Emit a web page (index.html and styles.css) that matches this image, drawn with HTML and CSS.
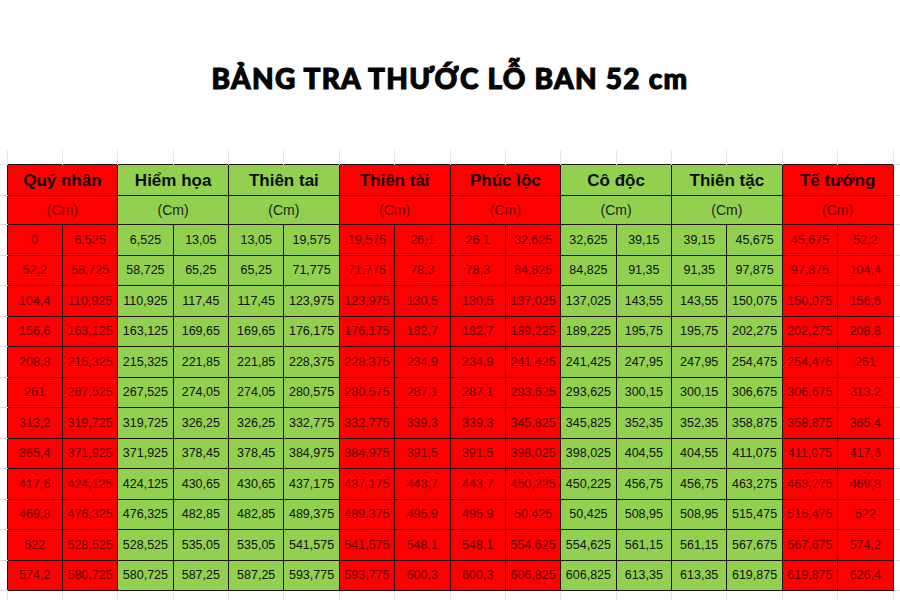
FILE: index.html
```html
<!DOCTYPE html>
<html lang="vi">
<head>
<meta charset="utf-8">
<title>Bảng tra thước Lỗ Ban 52 cm</title>
<link rel="stylesheet" href="styles.css">
</head>
<body>
<div class="page">
  <header class="title-wrap"><h1 class="title">BẢNG TRA THƯỚC LỖ BAN 52 cm</h1></header>
  <table class="sheet">
    <colgroup>
      <col class="c-edge">
      <col class="c"><col class="c"><col class="c"><col class="c"><col class="c"><col class="c"><col class="c"><col class="c">
      <col class="c"><col class="c"><col class="c"><col class="c"><col class="c"><col class="c"><col class="c"><col class="c">
      <col class="c-edge">
    </colgroup>
    <tr class="ghost">
      <td class="ge"></td>
      <td></td><td></td><td></td><td></td><td></td><td></td><td></td><td></td>
      <td></td><td></td><td></td><td></td><td></td><td></td><td></td><td></td>
      <td class="ge"></td>
    </tr>
    <tr class="head">
      <td class="edge"></td>
      <td class="r" colspan="2">Quý nhân</td>
      <td class="g" colspan="2">Hiểm họa</td>
      <td class="g" colspan="2">Thiên tai</td>
      <td class="r" colspan="2">Thiên tài</td>
      <td class="r" colspan="2">Phúc lộc</td>
      <td class="g" colspan="2">Cô độc</td>
      <td class="g" colspan="2">Thiên tặc</td>
      <td class="r" colspan="2">Tế tướng</td>
      <td class="edge"></td>
    </tr>
    <tr class="unit">
      <td class="edge"></td>
      <td class="r" colspan="2">(Cm)</td>
      <td class="g" colspan="2">(Cm)</td>
      <td class="g" colspan="2">(Cm)</td>
      <td class="r" colspan="2">(Cm)</td>
      <td class="r" colspan="2">(Cm)</td>
      <td class="g" colspan="2">(Cm)</td>
      <td class="g" colspan="2">(Cm)</td>
      <td class="r" colspan="2">(Cm)</td>
      <td class="edge"></td>
    </tr>
    <tr class="data"><td class="edge"></td><td class="r">0</td><td class="r">6,525</td><td class="g">6,525</td><td class="g">13,05</td><td class="g">13,05</td><td class="g">19,575</td><td class="r">19,575</td><td class="r">26,1</td><td class="r">26,1</td><td class="r">32,625</td><td class="g">32,625</td><td class="g">39,15</td><td class="g">39,15</td><td class="g">45,675</td><td class="r">45,675</td><td class="r">52,2</td><td class="edge"></td></tr>
    <tr class="data"><td class="edge"></td><td class="r">52,2</td><td class="r">58,725</td><td class="g">58,725</td><td class="g">65,25</td><td class="g">65,25</td><td class="g">71,775</td><td class="r">71,775</td><td class="r">78,3</td><td class="r">78,3</td><td class="r">84,825</td><td class="g">84,825</td><td class="g">91,35</td><td class="g">91,35</td><td class="g">97,875</td><td class="r">97,875</td><td class="r">104,4</td><td class="edge"></td></tr>
    <tr class="data"><td class="edge"></td><td class="r">104,4</td><td class="r">110,925</td><td class="g">110,925</td><td class="g">117,45</td><td class="g">117,45</td><td class="g">123,975</td><td class="r">123,975</td><td class="r">130,5</td><td class="r">130,5</td><td class="r">137,025</td><td class="g">137,025</td><td class="g">143,55</td><td class="g">143,55</td><td class="g">150,075</td><td class="r">150,075</td><td class="r">156,6</td><td class="edge"></td></tr>
    <tr class="data"><td class="edge"></td><td class="r">156,6</td><td class="r">163,125</td><td class="g">163,125</td><td class="g">169,65</td><td class="g">169,65</td><td class="g">176,175</td><td class="r">176,175</td><td class="r">182,7</td><td class="r">182,7</td><td class="r">189,225</td><td class="g">189,225</td><td class="g">195,75</td><td class="g">195,75</td><td class="g">202,275</td><td class="r">202,275</td><td class="r">208,8</td><td class="edge"></td></tr>
    <tr class="data"><td class="edge"></td><td class="r">208,8</td><td class="r">215,325</td><td class="g">215,325</td><td class="g">221,85</td><td class="g">221,85</td><td class="g">228,375</td><td class="r">228,375</td><td class="r">234,9</td><td class="r">234,9</td><td class="r">241,425</td><td class="g">241,425</td><td class="g">247,95</td><td class="g">247,95</td><td class="g">254,475</td><td class="r">254,475</td><td class="r">261</td><td class="edge"></td></tr>
    <tr class="data"><td class="edge"></td><td class="r">261</td><td class="r">267,525</td><td class="g">267,525</td><td class="g">274,05</td><td class="g">274,05</td><td class="g">280,575</td><td class="r">280,575</td><td class="r">287,1</td><td class="r">287,1</td><td class="r">293,625</td><td class="g">293,625</td><td class="g">300,15</td><td class="g">300,15</td><td class="g">306,675</td><td class="r">306,675</td><td class="r">313,2</td><td class="edge"></td></tr>
    <tr class="data"><td class="edge"></td><td class="r">313,2</td><td class="r">319,725</td><td class="g">319,725</td><td class="g">326,25</td><td class="g">326,25</td><td class="g">332,775</td><td class="r">332,775</td><td class="r">339,3</td><td class="r">339,3</td><td class="r">345,825</td><td class="g">345,825</td><td class="g">352,35</td><td class="g">352,35</td><td class="g">358,875</td><td class="r">358,875</td><td class="r">365,4</td><td class="edge"></td></tr>
    <tr class="data"><td class="edge"></td><td class="r">365,4</td><td class="r">371,925</td><td class="g">371,925</td><td class="g">378,45</td><td class="g">378,45</td><td class="g">384,975</td><td class="r">384,975</td><td class="r">391,5</td><td class="r">391,5</td><td class="r">398,025</td><td class="g">398,025</td><td class="g">404,55</td><td class="g">404,55</td><td class="g">411,075</td><td class="r">411,075</td><td class="r">417,6</td><td class="edge"></td></tr>
    <tr class="data"><td class="edge"></td><td class="r">417,6</td><td class="r">424,125</td><td class="g">424,125</td><td class="g">430,65</td><td class="g">430,65</td><td class="g">437,175</td><td class="r">437,175</td><td class="r">443,7</td><td class="r">443,7</td><td class="r">450,225</td><td class="g">450,225</td><td class="g">456,75</td><td class="g">456,75</td><td class="g">463,275</td><td class="r">463,275</td><td class="r">469,8</td><td class="edge"></td></tr>
    <tr class="data"><td class="edge"></td><td class="r">469,8</td><td class="r">476,325</td><td class="g">476,325</td><td class="g">482,85</td><td class="g">482,85</td><td class="g">489,375</td><td class="r">489,375</td><td class="r">495,9</td><td class="r">495,9</td><td class="r">50,425</td><td class="g">50,425</td><td class="g">508,95</td><td class="g">508,95</td><td class="g">515,475</td><td class="r">515,475</td><td class="r">522</td><td class="edge"></td></tr>
    <tr class="data"><td class="edge"></td><td class="r">522</td><td class="r">528,525</td><td class="g">528,525</td><td class="g">535,05</td><td class="g">535,05</td><td class="g">541,575</td><td class="r">541,575</td><td class="r">548,1</td><td class="r">548,1</td><td class="r">554,625</td><td class="g">554,625</td><td class="g">561,15</td><td class="g">561,15</td><td class="g">567,675</td><td class="r">567,675</td><td class="r">574,2</td><td class="edge"></td></tr>
    <tr class="data"><td class="edge"></td><td class="r">574,2</td><td class="r">580,725</td><td class="g">580,725</td><td class="g">587,25</td><td class="g">587,25</td><td class="g">593,775</td><td class="r">593,775</td><td class="r">600,3</td><td class="r">600,3</td><td class="r">606,825</td><td class="g">606,825</td><td class="g">613,35</td><td class="g">613,35</td><td class="g">619,875</td><td class="r">619,875</td><td class="r">626,4</td><td class="edge"></td></tr>
    <tr class="ghost">
      <td class="ge"></td>
      <td></td><td></td><td></td><td></td><td></td><td></td><td></td><td></td>
      <td></td><td></td><td></td><td></td><td></td><td></td><td></td><td></td>
      <td class="ge"></td>
    </tr>
  </table>
</div>
</body>
</html>
```
FILE: styles.css
```css
html, body {
  margin: 0;
  padding: 0;
  background: #ffffff;
}

.page {
  width: 900px;
  height: 600px;
  overflow: hidden;
  font-family: "Liberation Sans", Arial, sans-serif;
}

.title-wrap {
  height: 150px;
  padding-top: 6px;
  box-sizing: border-box;
  display: flex;
  align-items: center;
  justify-content: center;
}

.title {
  margin: 0;
  font-family: Lato, "Open Sans", sans-serif;
  font-weight: 900;
  font-size: 28px;
  letter-spacing: 1.25px;
  line-height: 34px;
  color: #050505;
  -webkit-text-stroke: 1.1px #050505;
}

.sheet {
  width: 900px;
  table-layout: fixed;
  border-collapse: collapse;
}

.c-edge { width: 7px; }
.c { width: 55.375px; }

.sheet td {
  padding: 0;
  text-align: center;
  white-space: nowrap;
  overflow: hidden;
}

.ghost td {
  height: 14px;
  border-left: 1px solid #e6e6e6;
  border-right: 1px solid #e6e6e6;
}

.ghost td.ge {
  border-left: none;
  border-right: none;
}

.edge {
  border-top: 1px solid #dcdcdc;
  border-bottom: 1px solid #dcdcdc;
}

.r, .g {
  border: 1px solid #221010;
}

.r { background: #fe0000; color: #6a0000; }
.g { background: #92d050; color: #111111; }

.head td {
  height: 28px;
  padding-top: 2px;
}
.head .r, .head .g {
  font-weight: 700;
  font-size: 17px;
  color: #0d0d0d;
}
.head .r { color: #1a0000; }

.unit td { height: 28px; }
.unit .r, .unit .g { font-size: 14px; }
.unit .r { color: #7a0000; }
.unit .g { color: #222222; }

.data td {
  height: 29.5px;
  font-size: 12.5px;
}
```
